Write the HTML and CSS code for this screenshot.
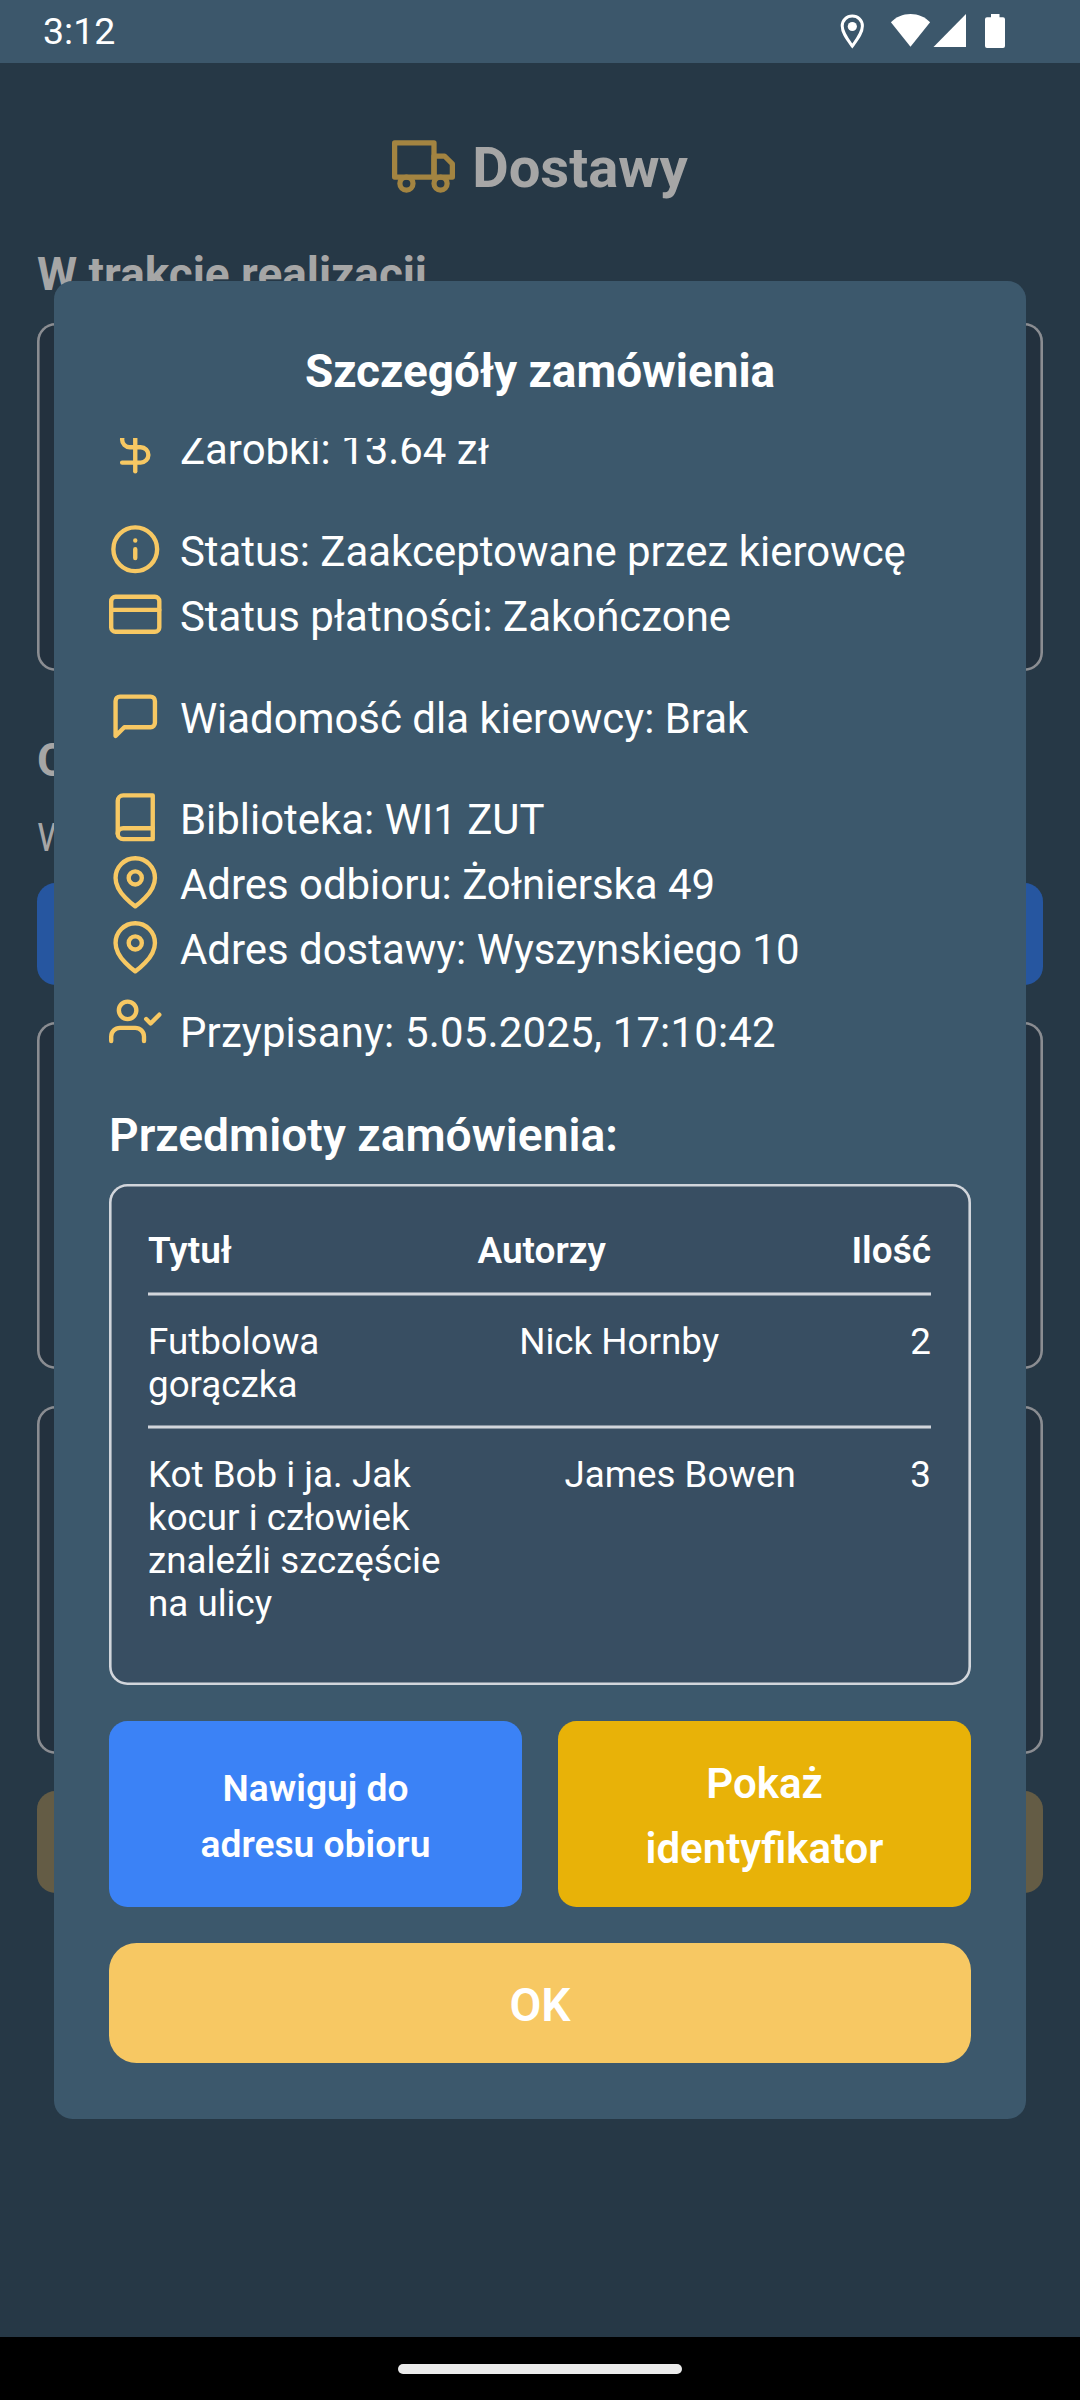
FILE: index.html
```html
<!DOCTYPE html>
<html lang="pl">
<head>
<meta charset="utf-8">
<title>Dostawy</title>
<link rel="stylesheet" href="styles.css">
</head>
<body>
<div class="phone">
  <header class="status-bar">
    <span class="clock">3:12</span>
    <svg class="status-icons" viewBox="0 0 190 63" fill="#fff">
      <path d="M17.300 16c-5.600 0-10.100 4.400-10.100 10 0 6.800 5.200 13.200 10.100 20 4.900-6.800 10.100-13.200 10.100-20 0-5.600-4.500-10-10.100-10z" fill="none" stroke="#fff" stroke-width="3"/>
      <circle cx="17.300" cy="26.500" r="4.600"/>
      <g transform="translate(20 0)">
        <path d="M55.500 14c7.800 0 14.500 3 19.600 8.300L55.500 46.700 35.900 22.300C41 17 47.700 14 55.500 14z"/>
        <path d="M111 14v33H78.500z"/>
        <path d="M136 14h8.500v3.300h3.500a2 2 0 0 1 2 2V46a2 2 0 0 1-2 2h-16a2 2 0 0 1-2-2V19.300a2 2 0 0 1 2-2h4z"/>
      </g>
    </svg>
  </header>

  <main class="screen">
    <div class="page-title">
      <svg class="truck" viewBox="0 0 24 24"><rect x="1" y="3" width="15" height="13"/><path d="M16 8h4l3 3v5h-7z"/><circle cx="5.500" cy="18.500" r="2.500"/><circle cx="18.500" cy="18.500" r="2.500"/></svg>
      <h1>Dostawy</h1>
    </div>
    <h2 class="first">W trakcie realizacji</h2>
    <div class="card"></div>
    <h2 class="second">Oczekujące zamówienia</h2>
    <p class="hint">Wybierz maksymalny dystans wyszukiwania:</p>
    <div class="bar blue"></div>
    <div class="card"></div>
    <div class="card"></div>
    <div class="bar gold"></div>
  </main>

  <section class="modal">
    <h2 class="modal-title">Szczegóły zamówienia</h2>
    <div class="scroll">
      <div class="details">
        <div class="group">
          <div class="row"><svg viewBox="0 0 24 24"><path d="M12 1v22"/><path d="M17 5H9.500a3.500 3.500 0 0 0 0 7h5a3.500 3.500 0 0 1 0 7H6"/></svg><span>Zarobki: 13.64 zł</span></div>
        </div>
        <div class="group">
          <div class="row"><svg viewBox="0 0 24 24"><circle cx="12" cy="12" r="10"/><path d="M12 16v-4M12 8h.01"/></svg><span>Status: Zaakceptowane przez kierowcę</span></div>
          <div class="row"><svg viewBox="0 0 24 24"><rect x="1" y="4" width="22" height="16" rx="2"/><path d="M1 10h22"/></svg><span>Status płatności: Zakończone</span></div>
        </div>
        <div class="group">
          <div class="row"><svg viewBox="0 0 24 24"><path d="M21 15a2 2 0 0 1-2 2H7l-4 4V5a2 2 0 0 1 2-2h14a2 2 0 0 1 2 2z"/></svg><span>Wiadomość dla kierowcy: Brak</span></div>
        </div>
        <div class="group">
          <div class="row"><svg viewBox="0 0 24 24"><path d="M4 19.500A2.500 2.500 0 0 1 6.500 17H20"/><path d="M6.500 2H20v20H6.500A2.500 2.500 0 0 1 4 19.500v-15A2.500 2.500 0 0 1 6.500 2z"/></svg><span>Biblioteka: WI1 ZUT</span></div>
          <div class="row"><svg viewBox="0 0 24 24"><path d="M21 10c0 7-9 13-9 13s-9-6-9-13a9 9 0 0 1 18 0z"/><circle cx="12" cy="10" r="3"/></svg><span>Adres odbioru: Żołnierska 49</span></div>
          <div class="row"><svg viewBox="0 0 24 24"><path d="M21 10c0 7-9 13-9 13s-9-6-9-13a9 9 0 0 1 18 0z"/><circle cx="12" cy="10" r="3"/></svg><span>Adres dostawy: Wyszynskiego 10</span></div>
          <div class="row assigned"><svg viewBox="0 0 24 24"><path d="M16 21v-2a4 4 0 0 0-4-4H5a4 4 0 0 0-4 4v2"/><circle cx="8.500" cy="7" r="4"/><path d="M17 11l2 2 4-4"/></svg><span>Przypisany: 5.05.2025, 17:10:42</span></div>
        </div>
      </div>
      <h3>Przedmioty zamówienia:</h3>
      <div class="items">
        <div class="item head"><span>Tytuł</span><span>Autorzy</span><span>Ilość</span></div>
        <div class="rule"></div>
        <div class="item"><span class="short">Futbolowa gorączka</span><span>Nick Hornby</span><span>2</span></div>
        <div class="rule"></div>
        <div class="item"><span class="long">Kot Bob i ja. Jak kocur i człowiek znaleźli szczęście na ulicy</span><span>James Bowen</span><span>3</span></div>
      </div>
    </div>
    <div class="actions">
      <button class="navigate">Nawiguj do<br>adresu obioru</button>
      <button class="badge">Pokaż<br>identyfikator</button>
    </div>
    <button class="ok">OK</button>
  </section>

  <footer class="nav-bar"><div class="handle"></div></footer>
</div>
</body>
</html>
```
FILE: styles.css
```css
* { box-sizing: border-box; margin: 0; padding: 0; }
body { font-family: Roboto, sans-serif; background: #263846; }
.phone {
  position: relative;
  display: flex;
  flex-direction: column;
  width: 1080px;
  height: 2400px;
  overflow: hidden;
}

/* system bars */
.status-bar {
  display: flex;
  justify-content: space-between;
  height: 63px;
  padding: 0 55px 0 43px;
  background: #3c576b;
  color: #fff;
}
.clock { font-size: 37.500px; line-height: 63px; }
.status-icons { width: 190px; height: 63px; }
.nav-bar {
  display: flex;
  justify-content: center;
  align-items: center;
  height: 63px;
  background: #000;
}
.handle { width: 284px; height: 10px; border-radius: 5px; background: #ebebeb; }

/* dimmed page */
.screen { flex: 1; padding: 72px 37px 0; color: #a6a6a6; }
.page-title {
  display: flex;
  justify-content: center;
  gap: 17px;
  height: 66px;
}
.page-title h1 { font-size: 56.200px; line-height: 66px; }
.truck {
  width: 63px;
  height: 63px;
  fill: none;
  stroke: #a38441;
  stroke-width: 2;
  stroke-linecap: round;
  stroke-linejoin: round;
}
.screen h2 { font-size: 45.900px; line-height: 64px; white-space: nowrap; }
.screen .first { margin-top: 41px; }
.screen .second { margin-top: 57px; }
.hint { margin-top: 19px; font-size: 38px; line-height: 55px; }
.card {
  height: 347.500px;
  border-radius: 18.400px;
  background: #23313e;
  box-shadow: inset 0 0 0 2.600px #8a8d92;
}
.first + .card { margin-top: 17px; }
.card + .card { margin-top: 37px; }
.bar { height: 102px; border-radius: 18.400px; }
.blue { margin: 17px 0 37px; background: #2656a0; }
.gold { margin-top: 37px; background: #645c45; }

/* order details dialog */
.modal {
  position: absolute;
  left: 54px;
  top: 281px;
  display: flex;
  flex-direction: column;
  width: 972px;
  height: 1838px;
  padding: 55px;
  border-radius: 18.400px;
  background: #3c586c;
  color: #fff;
}
.modal-title { height: 102px; font-size: 45.900px; line-height: 71px; text-align: center; }
.scroll { height: 1247px; overflow: hidden; }
.details {
  display: flex;
  flex-direction: column;
  gap: 36.750px;
  margin-top: -20px;
}
.row { display: flex; align-items: flex-start; height: 65px; }
.row svg {
  width: 52.500px;
  height: 52.500px;
  margin: 3px 18.400px 0 0;
  fill: none;
  stroke: #f7c863;
  stroke-width: 2;
  stroke-linecap: round;
  stroke-linejoin: round;
}
.row span { font-size: 41.950px; line-height: 64px; white-space: nowrap; }
.row.assigned { height: 83px; padding-top: 9px; }
.row.assigned span { padding-top: 9px; letter-spacing: 0.170px; }
.scroll h3 { margin-top: 37px; font-size: 46.200px; line-height: 64px; font-weight: 600; }
.items {
  height: 501px;
  margin-top: 17px;
  padding: 39px 40px 39px 39px;
  border-radius: 18.400px;
  background: #384e62;
  box-shadow: inset 0 0 0 2.600px #d1d5db;
}
.item {
  display: flex;
  justify-content: space-between;
  font-size: 36.750px;
  line-height: 43px;
}
.head { height: 69px; font-size: 37px; line-height: 55px; font-weight: 600; }
.rule {
  height: 4px;
  background: linear-gradient(#8894a1 1px, #d1d5db 1px 3px, #8894a1 3px);
}
.rule + .item { padding-top: 24px; }
.rule + .item:not(:last-child) { height: 129px; }
.short { width: 180px; }
.long { width: 302px; }
.actions { display: flex; gap: 36px; margin-top: 36px; }
button {
  padding-top: 4px;
  border: 0;
  color: #fff;
  font-family: inherit;
  font-weight: 600;
}
.actions button { flex: 1; height: 186px; border-radius: 18.400px; }
.navigate { background: #3b82f6; font-size: 37.200px; line-height: 56px; }
.badge { background: #e8b208; font-size: 42px; line-height: 65px; }
.ok {
  height: 120px;
  margin-top: 36px;
  border-radius: 27.600px;
  background: #f7c863;
  font-size: 46.200px;
  line-height: 65px;
}
```
